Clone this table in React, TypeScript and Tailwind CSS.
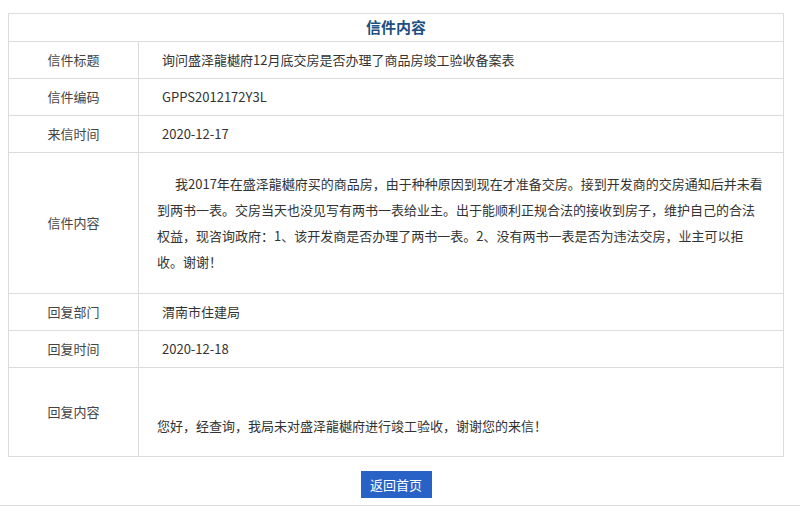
import React from "react";

type Row = {
  label: string;
  value: React.ReactNode;
  height: string;
  paragraph?: boolean;
};

const rows: Row[] = [
  { label: "信件标题", value: "询问盛泽龍樾府12月底交房是否办理了商品房竣工验收备案表", height: "h-[37px]" },
  { label: "信件编码", value: "GPPS2012172Y3L", height: "h-[37px]" },
  { label: "来信时间", value: "2020-12-17", height: "h-[37px]" },
  {
    label: "信件内容",
    height: "h-[141px]",
    paragraph: true,
    value: (
      <div className="leading-[26px] whitespace-nowrap">
        <div className="pl-[18px]">我2017年在盛泽龍樾府买的商品房，由于种种原因到现在才准备交房。接到开发商的交房通知后并未看</div>
        <div>到两书一表。交房当天也没见写有两书一表给业主。出于能顺利正规合法的接收到房子，维护自己的合法</div>
        <div>权益，现咨询政府：1、该开发商是否办理了两书一表。2、没有两书一表是否为违法交房，业主可以拒</div>
        <div>收。谢谢！</div>
      </div>
    ),
  },
  { label: "回复部门", value: "渭南市住建局", height: "h-[37px]" },
  { label: "回复时间", value: "2020-12-18", height: "h-[37px]" },
  {
    label: "回复内容",
    height: "h-[89px]",
    paragraph: true,
    value: (
      <div className="leading-[28px] whitespace-nowrap">
        <div>&nbsp;</div>
        <div>您好，经查询，我局未对盛泽龍樾府进行竣工验收，谢谢您的来信！</div>
      </div>
    ),
  },
];

const App: React.FC = () => {
  return (
    <div className="w-[800px] h-[509px] bg-white overflow-hidden font-['Microsoft_YaHei','Noto_Sans_CJK_SC',sans-serif] text-[13px] text-[#333]">
      <div className="pt-[13px] pb-[7px] border-b border-[#dedede]">
        <div className="ml-[8px] w-[776px] border border-[#dcdcdc]">
          <div className="h-[27px] flex items-center justify-center text-[15px] font-bold text-[#1d4f80]">
            信件内容
          </div>
          {rows.map((row) => (
            <div key={row.label} className={`flex border-t border-[#dcdcdc] ${row.height}`}>
              <div className="w-[130px] shrink-0 border-r border-[#dcdcdc] flex items-center justify-center text-[#444]">
                {row.label}
              </div>
              <div className={`flex-1 flex items-center ${row.paragraph ? "pl-[18px]" : "pl-[23px]"}`}>
                {row.value}
              </div>
            </div>
          ))}
        </div>
        <div className="flex justify-center mt-[14px] pl-[8px] pr-[16px]">
          <button className="w-[71px] h-[27px] bg-[#2962c6] text-white text-[13px] flex items-center justify-center">
            返回首页
          </button>
        </div>
      </div>
    </div>
  );
};

export default App;
